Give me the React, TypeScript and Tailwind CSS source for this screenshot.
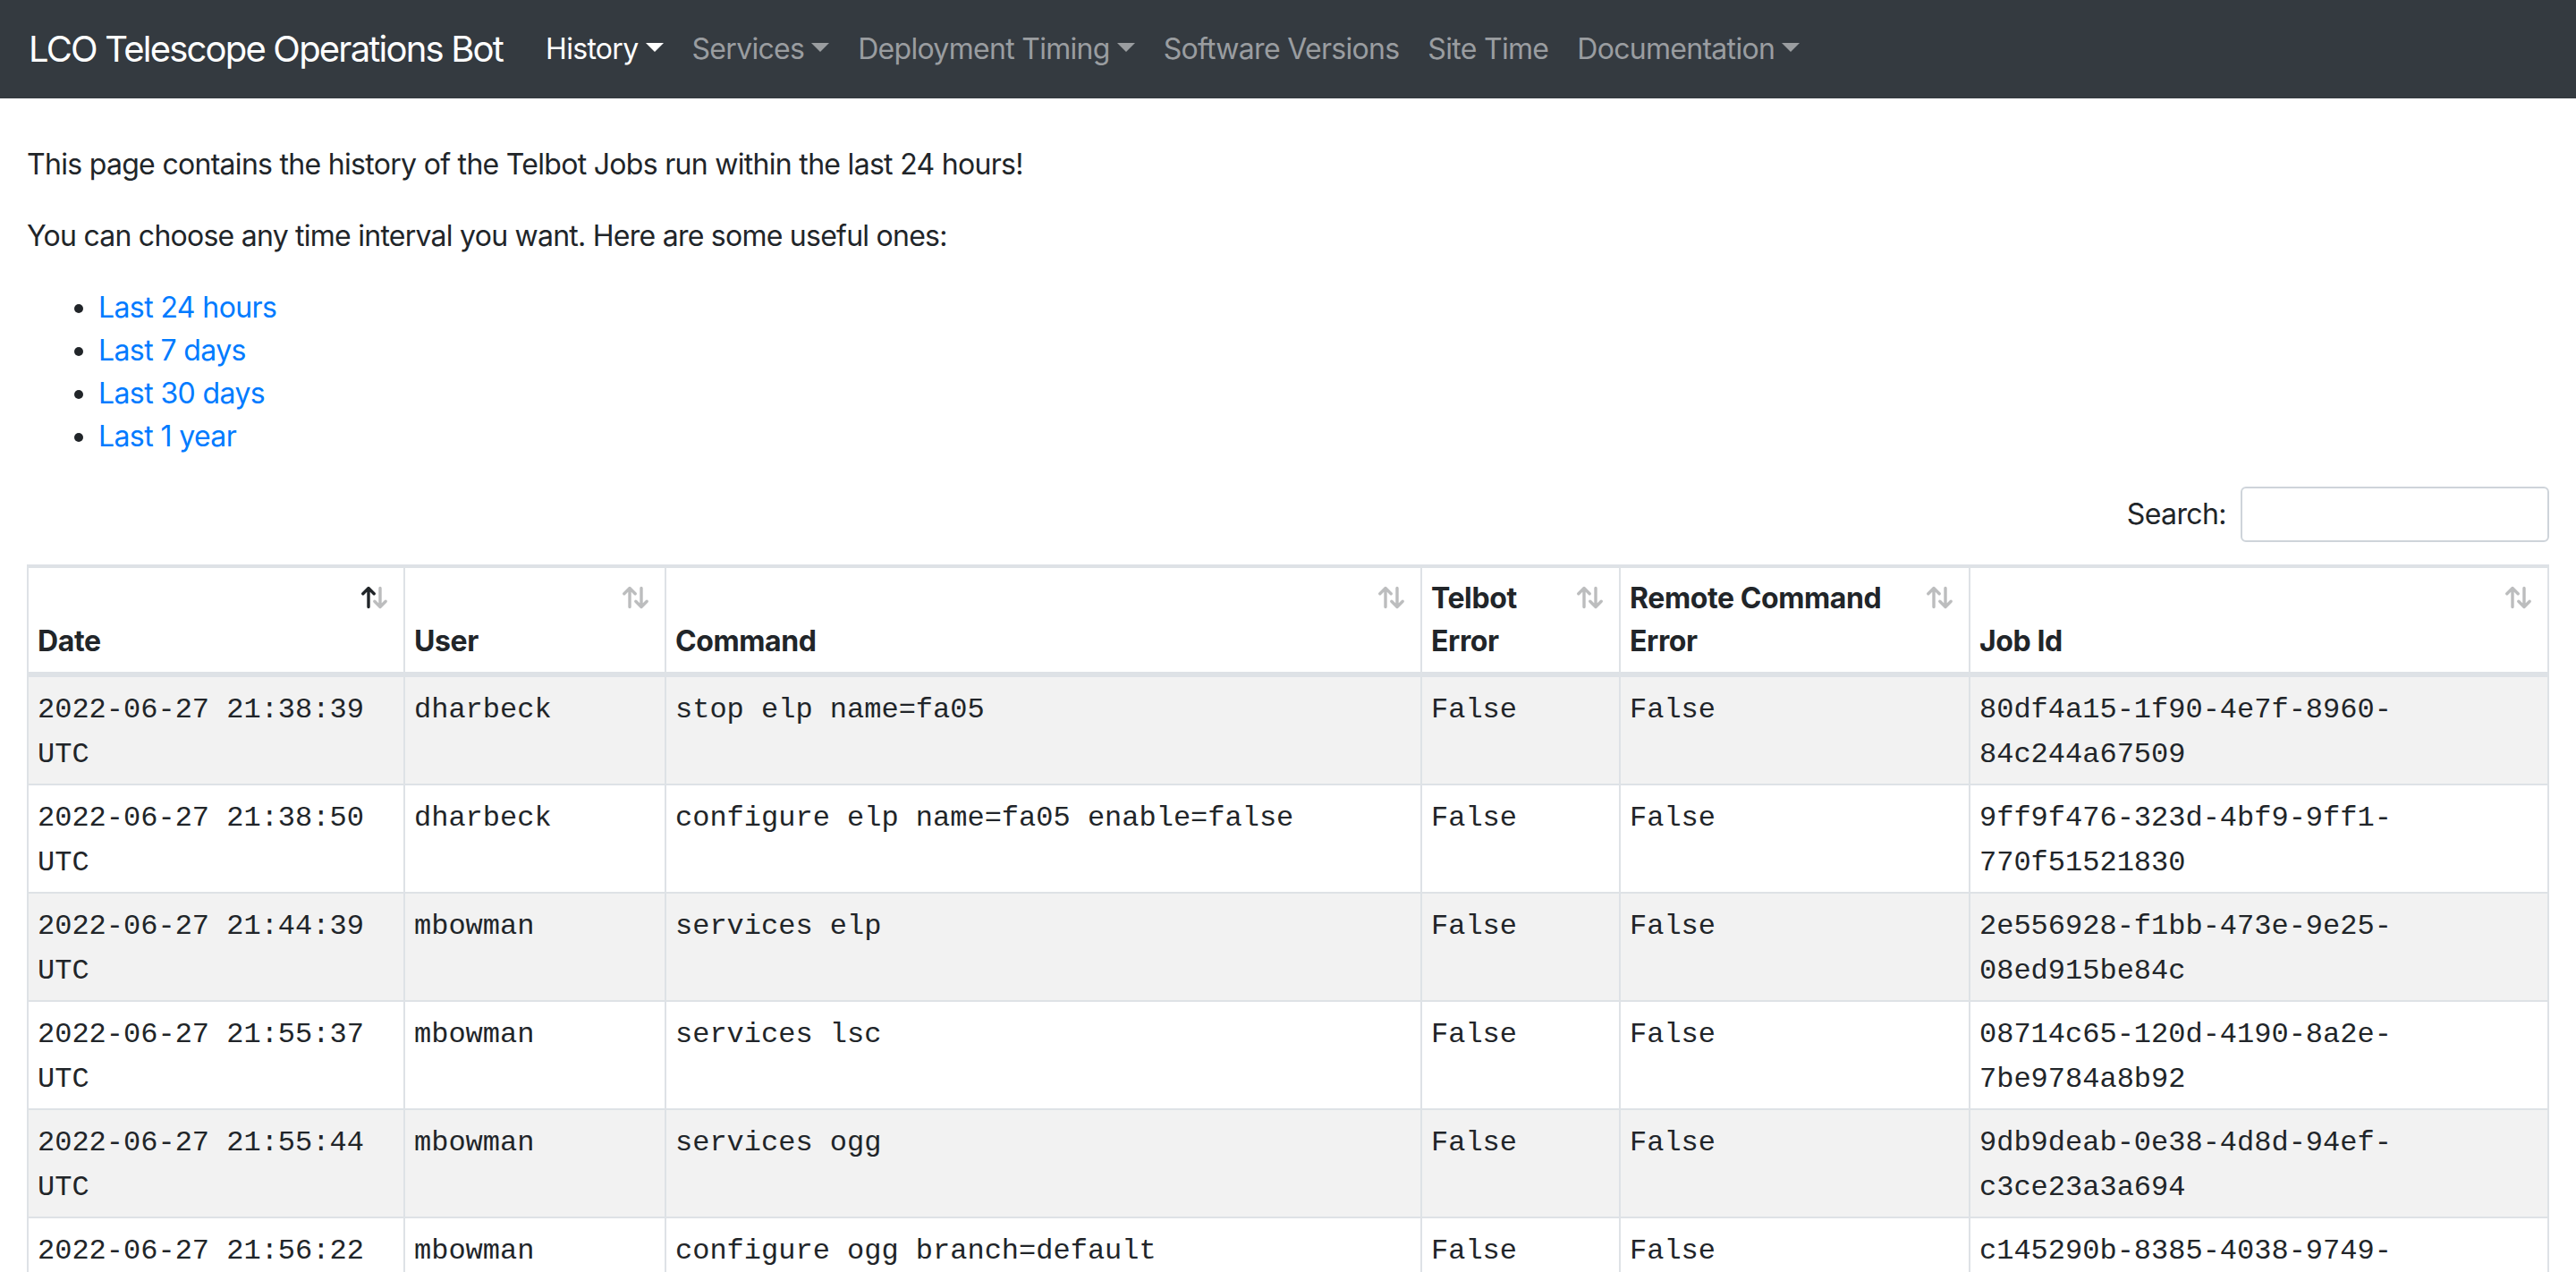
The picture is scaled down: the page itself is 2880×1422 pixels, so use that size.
import React from "react";

type Job = {
  date: string;
  user: string;
  command: string;
  telbotError: string;
  remoteError: string;
  jobId: string;
};

const jobs: Job[] = [
  { date: "2022-06-27 21:38:39 UTC", user: "dharbeck", command: "stop elp name=fa05", telbotError: "False", remoteError: "False", jobId: "80df4a15-1f90-4e7f-8960-84c244a67509" },
  { date: "2022-06-27 21:38:50 UTC", user: "dharbeck", command: "configure elp name=fa05 enable=false", telbotError: "False", remoteError: "False", jobId: "9ff9f476-323d-4bf9-9ff1-770f51521830" },
  { date: "2022-06-27 21:44:39 UTC", user: "mbowman", command: "services elp", telbotError: "False", remoteError: "False", jobId: "2e556928-f1bb-473e-9e25-08ed915be84c" },
  { date: "2022-06-27 21:55:37 UTC", user: "mbowman", command: "services lsc", telbotError: "False", remoteError: "False", jobId: "08714c65-120d-4190-8a2e-7be9784a8b92" },
  { date: "2022-06-27 21:55:44 UTC", user: "mbowman", command: "services ogg", telbotError: "False", remoteError: "False", jobId: "9db9deab-0e38-4d8d-94ef-c3ce23a3a694" },
  { date: "2022-06-27 21:56:22 UTC", user: "mbowman", command: "configure ogg branch=default", telbotError: "False", remoteError: "False", jobId: "c145290b-8385-4038-9749-5d1e2a7f0b63" },
  { date: "2022-06-27 21:57:10 UTC", user: "mbowman", command: "services ogg", telbotError: "False", remoteError: "False", jobId: "4a1f0c2e-77b3-4c1d-a0e9-3b6f8d2c9e41" },
];

const navItems = [
  { label: "History", dropdown: true, active: true },
  { label: "Services", dropdown: true },
  { label: "Deployment Timing", dropdown: true },
  { label: "Software Versions" },
  { label: "Site Time" },
  { label: "Documentation", dropdown: true },
];

const columns = [
  { label: "Date", width: "w-[421px]", active: true },
  { label: "User", width: "w-[292px]" },
  { label: "Command", width: "w-[845px]" },
  { label: "Telbot Error", width: "w-[222px]" },
  { label: "Remote Command Error", width: "w-[391px]" },
  { label: "Job Id", width: "" },
];

const ranges = ["Last 24 hours", "Last 7 days", "Last 30 days", "Last 1 year"];

function Caret() {
  return (
    <span className="ml-[8px] inline-block align-[8px] w-0 h-0 border-t-[10px] border-x-[10px] border-b-0 border-t-current border-x-transparent" />
  );
}

// datatables-style up/down sort arrows
function SortIcon({ active }: { active?: boolean }) {
  return (
    <svg
      className="absolute right-[17px] top-[20px]"
      width="30"
      height="26"
      viewBox="0 0 30 26"
      fill="none"
      strokeWidth="3.4"
      strokeLinecap="round"
      strokeLinejoin="round"
    >
      <path d="M8 2.5V23.5M1.8 8.7L8 2.5L14.2 8.7" stroke="#212529" opacity={active ? 1 : 0.3} />
      <path d="M21 2.5V23.5M14.8 17.3L21 23.5L27.2 17.3" stroke="#212529" opacity="0.3" />
    </svg>
  );
}

export default function App() {
  return (
    <div className="min-h-screen bg-white text-[#212529] font-['Inter',sans-serif] text-[32px] leading-[48px]">
      <nav className="h-[110px] bg-[#343a40] flex items-center px-[32px]">
        <span className="text-[40px] leading-[60px] text-white mr-[32px] tracking-[-1.8px]">
          LCO Telescope Operations Bot
        </span>
        <ul className="flex items-center">
          {navItems.map((item) => (
            <li
              key={item.label}
              className={`px-[16px] tracking-[-0.7px] ${item.active ? "text-white" : "text-[#9a9da0]"}`}
            >
              {item.label}
              {item.dropdown && <Caret />}
            </li>
          ))}
        </ul>
      </nav>

      <main className="px-[30px] pt-[50px]">
        <p className="mb-[32px] tracking-[-0.7px]">
          This page contains the history of the Telbot Jobs run within the last 24 hours!
        </p>
        <p className="mb-[32px] tracking-[-0.75px]">
          You can choose any time interval you want. Here are some useful ones:
        </p>
        <ul className="list-disc pl-[80px] mb-[32px]">
          {ranges.map((r) => (
            <li key={r} className="tracking-[-0.6px]">
              <a className="text-[#007bff]" href="#">
                {r}
              </a>
            </li>
          ))}
        </ul>

        <div className="flex justify-end items-center mb-[16px]">
          <label className="tracking-[-0.6px]">Search:</label>
          <input
            type="search"
            className="ml-[16px] w-[345px] h-[62px] border-2 border-[#ced4da] rounded-[6px] px-[16px] text-[28px] outline-none"
          />
        </div>

        <table className="w-full table-fixed border-separate border-spacing-0 border-2 border-[#dee2e6] mt-[25px]">
          <thead>
            <tr>
              {columns.map((c, i) => (
                <th
                  key={c.label}
                  className={`${c.width} relative align-bottom text-left font-bold pl-[10px] pr-[60px] py-[10px] border-t-2 border-b-4 border-[#dee2e6] tracking-[-0.4px] ${
                    i < columns.length - 1 ? "border-r-2" : ""
                  }`}
                >
                  {c.label}
                  <SortIcon active={c.active} />
                </th>
              ))}
            </tr>
          </thead>
          <tbody className="font-['Liberation_Mono',monospace] leading-[50px]">
            {jobs.map((j, idx) => {
              const cells = [j.date, j.user, j.command, j.telbotError, j.remoteError, j.jobId];
              return (
                <tr key={j.jobId} className={idx % 2 === 0 ? "bg-[#f2f2f2]" : "bg-white"}>
                  {cells.map((v, i) => (
                    <td
                      key={i}
                      className={`align-top px-[10px] pt-[12px] pb-[7px] border-t-2 border-[#dee2e6] ${
                        i < cells.length - 1 ? "border-r-2" : ""
                      }`}
                    >
                      {v}
                    </td>
                  ))}
                </tr>
              );
            })}
          </tbody>
        </table>
      </main>
    </div>
  );
}
